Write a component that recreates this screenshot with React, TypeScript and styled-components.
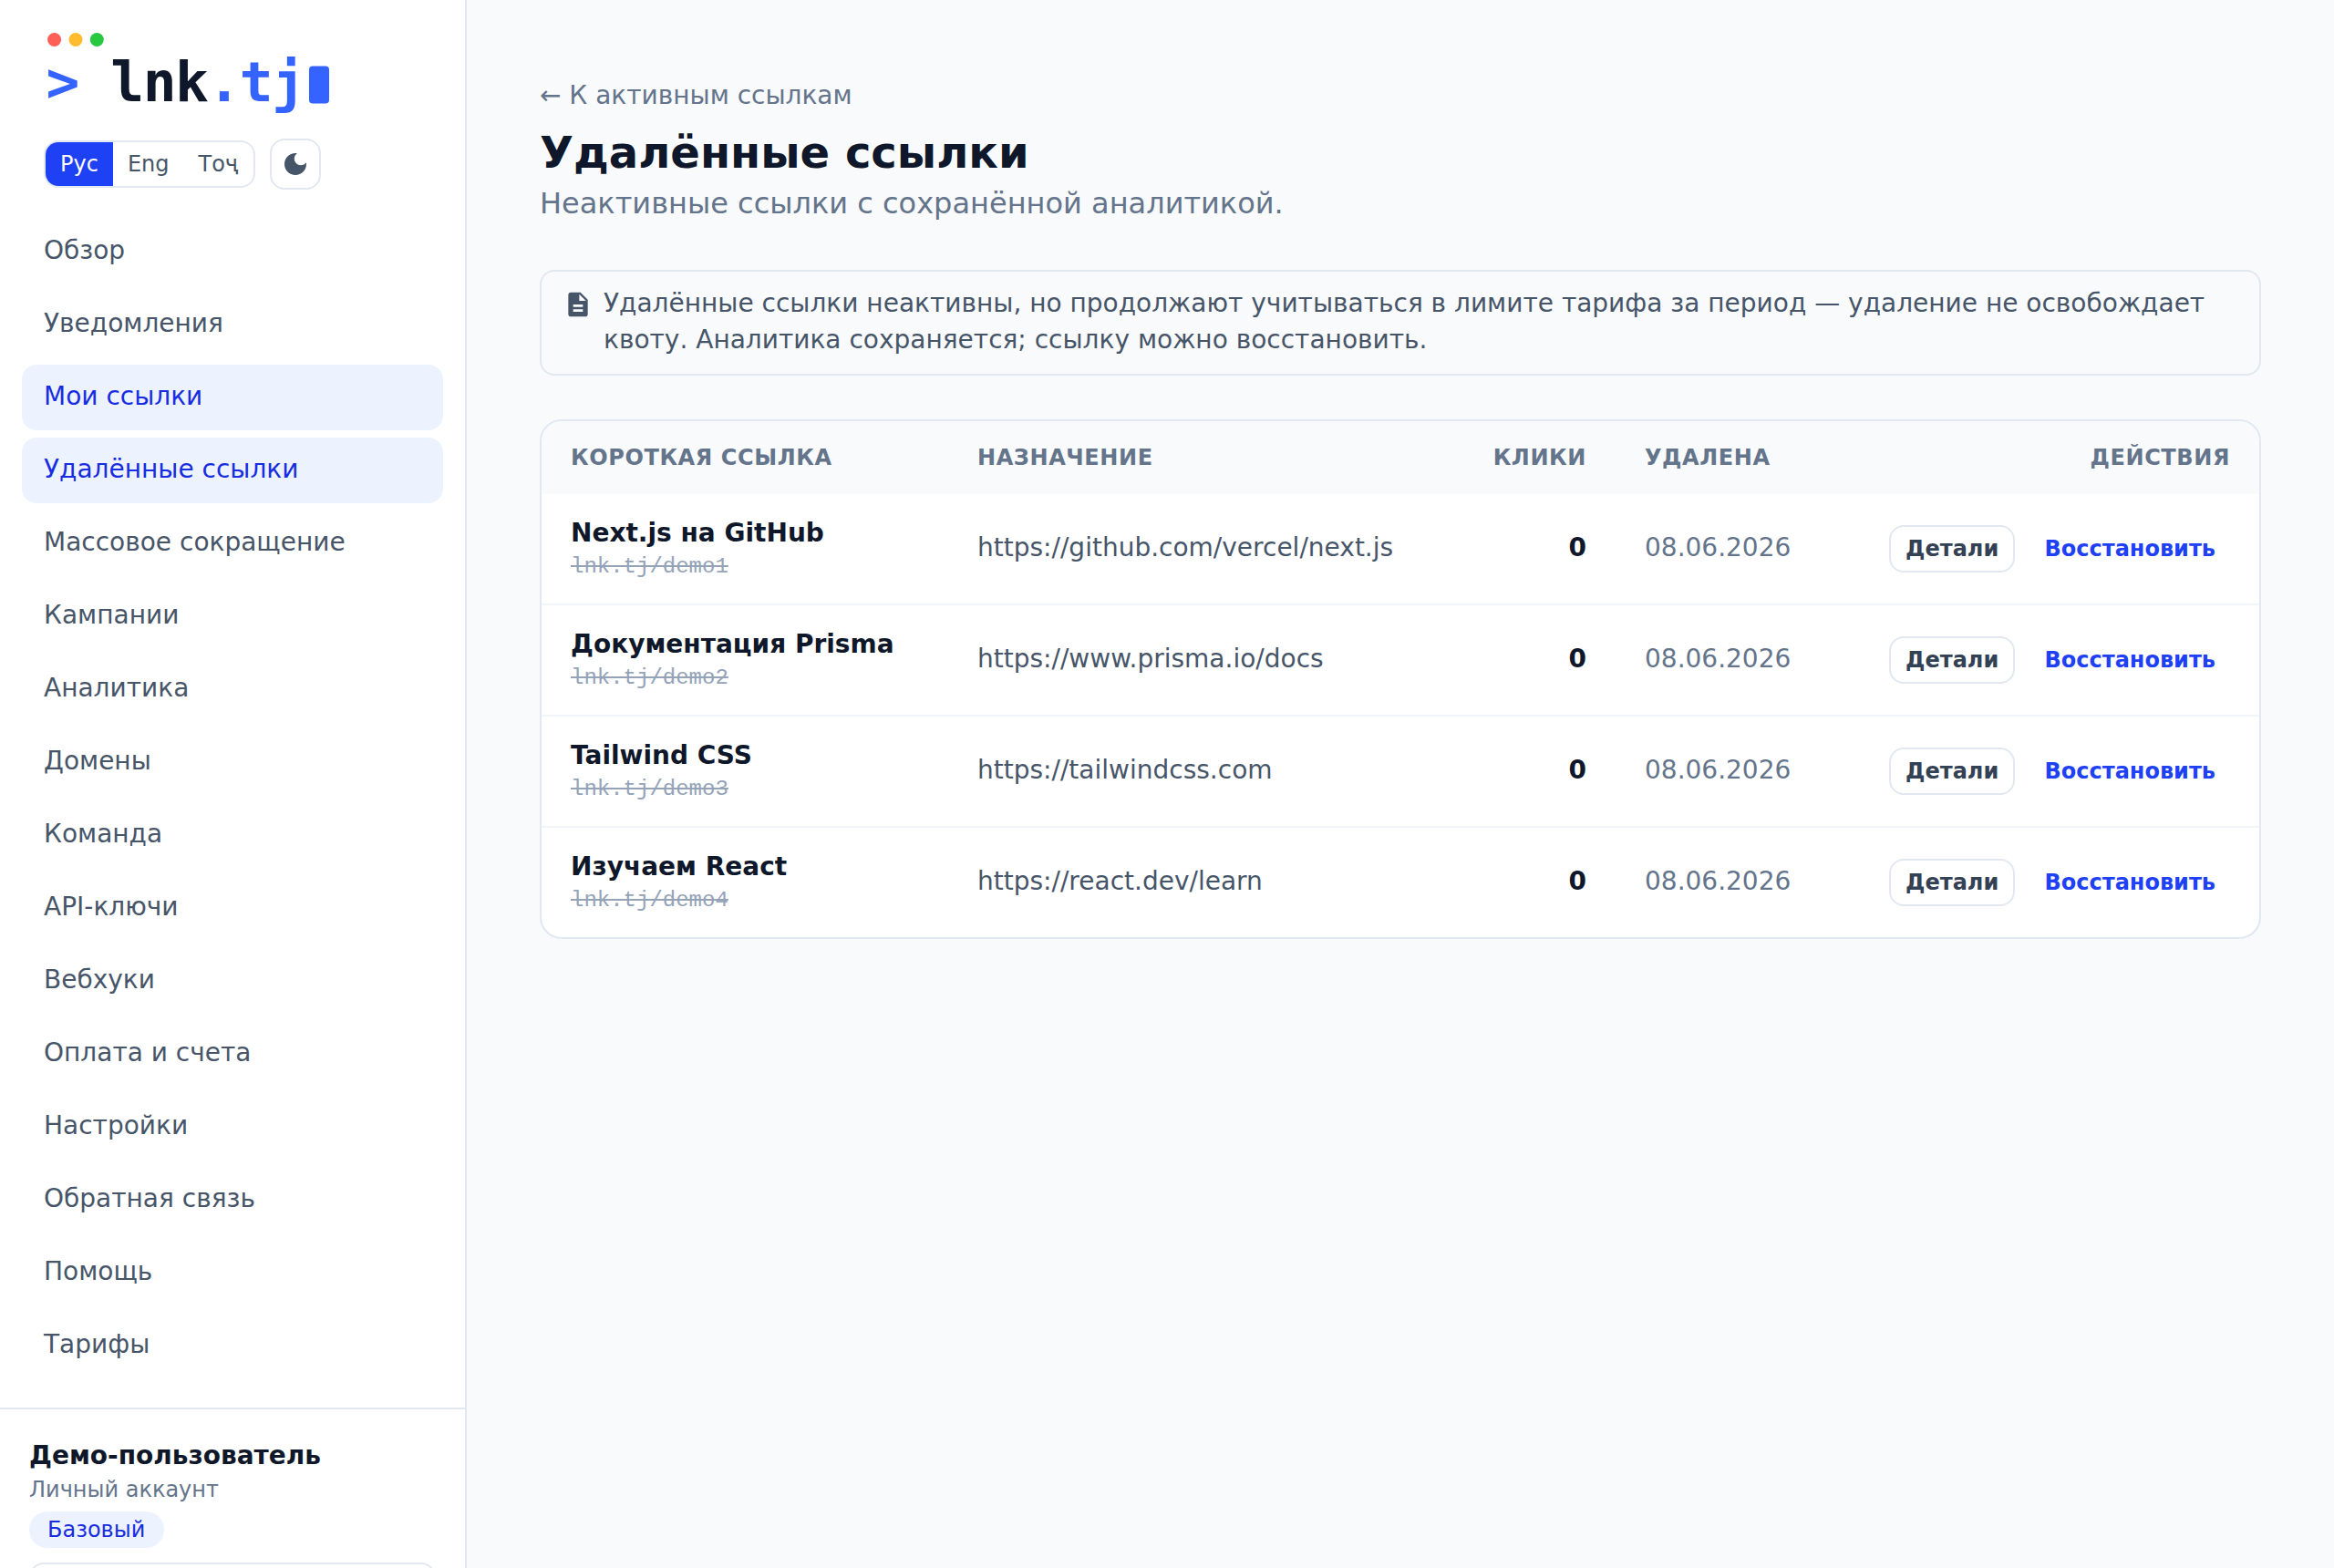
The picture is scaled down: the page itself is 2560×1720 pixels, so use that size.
import React from "react";
import styled, { createGlobalStyle } from "styled-components";

const sans = `"DejaVu Sans", sans-serif`;
const c = {
  ink: "#0f172a",
  body: "#475569",
  muted: "#64748b",
  faint: "#94a3b8",
  line: "#e2e8f0",
  rowLine: "#f1f5f9",
  surface: "#f8fafc",
  brand: "#3563ff",
  brandStrong: "#1f41f5",
  brandDeep: "#182de1",
  brandSoft: "#ecf3ff",
};

const GlobalStyle = createGlobalStyle`
  *, *::before, *::after { box-sizing: border-box; }
  html, body { margin: 0; padding: 0; height: 100%; overflow: hidden; }
  body { font-family: ${sans}; font-size: 28px; line-height: 40px; color: ${c.ink}; background: ${c.surface}; }
  button { font-family: inherit; cursor: pointer; }
  a { color: inherit; text-decoration: none; }
  h1, p { margin: 0; }
`;

const Shell = styled.div`
  display: flex;
  height: 1720px;
  overflow: hidden;
`;

const Sidebar = styled.aside`
  display: flex;
  flex-direction: column;
  flex: none;
  width: 512px;
  background: #fff;
  border-right: 2px solid ${c.line};
`;

const SidebarTop = styled.div`
  display: flex;
  flex: none;
  flex-direction: column;
  align-items: flex-start;
  height: 240px;
  padding: 32px 48px 0;
`;

const LogoSvg = styled.svg`
  display: block;
  width: 320px;
  height: 100px;
  flex: none;
  overflow: visible;
`;

const Controls = styled.div`
  display: flex;
  align-items: center;
  gap: 16px;
  margin-top: 20px;
`;

const LangSwitch = styled.div`
  display: flex;
  width: 232px;
  height: 52px;
  overflow: hidden;
  border: 2px solid ${c.line};
  border-radius: 16px;
`;

const LangButton = styled.button<{ $active?: boolean }>`
  padding: 8px 16px;
  border: 0;
  font-size: 24px;
  line-height: 32px;
  color: ${(p) => (p.$active ? "#fff" : c.body)};
  background: ${(p) => (p.$active ? c.brandStrong : "#fff")};
`;

const ThemeButton = styled.button`
  display: grid;
  place-items: center;
  width: 56px;
  height: 56px;
  padding: 0;
  border: 2px solid ${c.line};
  border-radius: 16px;
  color: ${c.body};
  background: #fff;
`;

const Nav = styled.nav`
  display: flex;
  flex: none;
  flex-direction: column;
  gap: 8px;
  padding: 0 24px 32px;
`;

const NavItem = styled.a<{ $active?: boolean }>`
  padding: 15px 24px 17px;
  border-radius: 16px;
  font-weight: 500;
  color: ${(p) => (p.$active ? c.brandDeep : c.body)};
  background: ${(p) => (p.$active ? c.brandSoft : "transparent")};
`;

const Account = styled.div`
  display: flex;
  flex-direction: column;
  flex: none;
  align-items: flex-start;
  padding: 31px 32px 32px;
  border-top: 2px solid ${c.line};
`;

const AccountName = styled.div`
  font-weight: 700;
`;

const AccountKind = styled.div`
  margin-top: 1px;
  font-size: 24px;
  line-height: 32px;
  color: ${c.muted};
`;

const PlanBadge = styled.span`
  min-width: 148px;
  margin-top: 8px;
  padding: 4px 20px;
  border-radius: 20px;
  font-size: 24px;
  line-height: 32px;
  color: ${c.brandDeep};
  background: ${c.brandSoft};
`;

const AccountButton = styled.button`
  align-self: stretch;
  height: 72px;
  margin-top: 16px;
  border: 2px solid ${c.line};
  border-radius: 16px;
  background: #fff;
`;

const Main = styled.main`
  flex: 1;
  padding: 85px 80px;
`;

const BackLink = styled.a`
  display: block;
  color: ${c.muted};
`;

const Title = styled.h1`
  margin-top: 10px;
  font-size: 48px;
  line-height: 64px;
  font-weight: 700;
`;

const Subtitle = styled.p`
  font-size: 32px;
  line-height: 48px;
  color: ${c.muted};
`;

const Notice = styled.div`
  display: flex;
  gap: 12px;
  margin-top: 49px;
  padding: 15px 24px 17px;
  border: 2px solid ${c.line};
  border-radius: 16px;
  color: ${c.body};
`;

const Icon = styled.svg`
  display: block;
  flex: none;
  width: 32px;
  height: 32px;
  fill: currentColor;
`;

const NoticeIcon = styled(Icon)`
  margin-top: 5px;
`;

const Card = styled.section`
  margin-top: 48px;
  overflow: hidden;
  border: 2px solid ${c.line};
  border-radius: 24px;
  background: #fff;
`;

const Table = styled.table`
  width: 100%;
  table-layout: fixed;
  border-collapse: separate;
  border-spacing: 0;
`;

const Col = styled.col<{ $w: number }>`
  width: ${(p) => p.$w}px;
`;

const Th = styled.th<{ $right?: boolean }>`
  padding: 24px 32px;
  font-size: 24px;
  line-height: 32px;
  font-weight: 700;
  letter-spacing: 0.6px;
  text-transform: uppercase;
  text-align: ${(p) => (p.$right ? "right" : "left")};
  color: ${c.muted};
  background: ${c.surface};
`;

const Row = styled.tr`
  &:not(:last-child) > td {
    border-bottom: 2px solid ${c.rowLine};
  }
`;

const Td = styled.td<{ $right?: boolean; $tone?: string; $bold?: boolean }>`
  padding: 23px 32px 25px;
  white-space: nowrap;
  vertical-align: middle;
  text-align: ${(p) => (p.$right ? "right" : "left")};
  color: ${(p) => p.$tone ?? c.ink};
  font-weight: ${(p) => (p.$bold ? 700 : 400)};
`;

const LinkName = styled.div`
  font-weight: 700;
`;

const ShortLink = styled.div`
  margin: 1px 0 -1px;
  font-family: "Liberation Mono", monospace;
  font-size: 24px;
  line-height: 32px;
  color: ${c.faint};
  text-decoration: line-through;
`;

const Actions = styled.div`
  display: flex;
  justify-content: flex-end;
  gap: 16.5px;
  padding-top: 2px;
`;

const ActionButton = styled.button<{ $ghost?: boolean }>`
  height: 52px;
  padding: ${(p) => (p.$ghost ? "0 16px" : "0 15.75px")};
  border: ${(p) => (p.$ghost ? "0" : `2px solid ${c.line}`)};
  border-radius: 16px;
  font-size: 24px;
  line-height: 32px;
  font-weight: 700;
  color: ${(p) => (p.$ghost ? c.brandStrong : "#334155")};
  background: #fff;
`;

const navItems = [
  "Обзор",
  "Уведомления",
  "Мои ссылки",
  "Удалённые ссылки",
  "Массовое сокращение",
  "Кампании",
  "Аналитика",
  "Домены",
  "Команда",
  "API-ключи",
  "Вебхуки",
  "Оплата и счета",
  "Настройки",
  "Обратная связь",
  "Помощь",
  "Тарифы",
];
const activeItems = new Set(["Мои ссылки", "Удалённые ссылки"]);

const links = [
  { name: "Next.js на GitHub", slug: "lnk.tj/demo1", url: "https://github.com/vercel/next.js" },
  { name: "Документация Prisma", slug: "lnk.tj/demo2", url: "https://www.prisma.io/docs" },
  { name: "Tailwind CSS", slug: "lnk.tj/demo3", url: "https://tailwindcss.com" },
  { name: "Изучаем React", slug: "lnk.tj/demo4", url: "https://react.dev/learn" },
];

function Logo() {
  return (
    <LogoSvg viewBox="48 32 320 100" role="img" aria-label="lnk.tj">
      <circle cx="59.6" cy="43.5" r="7.5" fill="#ff5f57" />
      <circle cx="83" cy="43.5" r="7.5" fill="#febc2e" />
      <circle cx="106.3" cy="43.5" r="7.5" fill="#28c840" />
      <text
        x="50.5"
        y="111"
        fontFamily='"DejaVu Sans Mono", monospace'
        fontSize="61.2"
        fontWeight="700"
        letterSpacing="-1.45"
        xmlSpace="preserve"
      >
        <tspan fill={c.brand}>&gt;</tspan>
        <tspan fill={c.ink}>{" lnk"}</tspan>
        <tspan fill={c.brand}>.tj</tspan>
      </text>
      <rect x="339" y="72.5" width="22" height="41" rx="4" fill={c.brand} />
    </LogoSvg>
  );
}

export default function App() {
  return (
    <>
      <GlobalStyle />
      <Shell>
        <Sidebar>
          <SidebarTop>
            <Logo />
            <Controls>
              <LangSwitch>
                <LangButton $active>Рус</LangButton>
                <LangButton>Eng</LangButton>
                <LangButton>Тоҷ</LangButton>
              </LangSwitch>
              <ThemeButton aria-label="Тема">
                <Icon viewBox="0 0 24 24">
                  <path d="M12 3c-4.97 0-9 4.03-9 9s4.03 9 9 9 9-4.03 9-9c0-.46-.04-.92-.1-1.36-.98 1.37-2.58 2.26-4.4 2.26-2.98 0-5.4-2.42-5.4-5.4 0-1.81.89-3.42 2.26-4.4-.44-.06-.9-.1-1.36-.1z" />
                </Icon>
              </ThemeButton>
            </Controls>
          </SidebarTop>
          <Nav>
            {navItems.map((label) => (
              <NavItem key={label} $active={activeItems.has(label)}>
                {label}
              </NavItem>
            ))}
          </Nav>
          <Account>
            <AccountName>Демо-пользователь</AccountName>
            <AccountKind>Личный аккаунт</AccountKind>
            <PlanBadge>Базовый</PlanBadge>
            <AccountButton />
          </Account>
        </Sidebar>
        <Main>
          <BackLink>← К активным ссылкам</BackLink>
          <Title>Удалённые ссылки</Title>
          <Subtitle>Неактивные ссылки с сохранённой аналитикой.</Subtitle>
          <Notice>
            <NoticeIcon viewBox="0 0 24 24">
              <path d="M14 2H6c-1.1 0-1.99.9-1.99 2L4 20c0 1.1.89 2 1.99 2H18c1.1 0 2-.9 2-2V8l-6-6zm2 16H8v-2h8v2zm0-4H8v-2h8v2zm-3-5V3.5L18.5 9H13z" />
            </NoticeIcon>
            <p>
              Удалённые ссылки неактивны, но продолжают учитываться в лимите тарифа за период — удаление не
              освобождает квоту. Аналитика сохраняется; ссылку можно восстановить.
            </p>
          </Notice>
          <Card>
            <Table>
              <colgroup>
                <Col $w={446} />
                <Col $w={556} />
                <Col $w={176} />
                <Col $w={224} />
                <Col $w={482} />
              </colgroup>
              <thead>
                <tr>
                  <Th>Короткая ссылка</Th>
                  <Th>Назначение</Th>
                  <Th $right>Клики</Th>
                  <Th>Удалена</Th>
                  <Th $right>Действия</Th>
                </tr>
              </thead>
              <tbody>
                {links.map((l) => (
                  <Row key={l.slug}>
                    <Td>
                      <LinkName>{l.name}</LinkName>
                      <ShortLink>{l.slug}</ShortLink>
                    </Td>
                    <Td $tone={c.body}>{l.url}</Td>
                    <Td $right $bold>0</Td>
                    <Td $tone={c.muted}>08.06.2026</Td>
                    <Td $right>
                      <Actions>
                        <ActionButton>Детали</ActionButton>
                        <ActionButton $ghost>Восстановить</ActionButton>
                      </Actions>
                    </Td>
                  </Row>
                ))}
              </tbody>
            </Table>
          </Card>
        </Main>
      </Shell>
    </>
  );
}
